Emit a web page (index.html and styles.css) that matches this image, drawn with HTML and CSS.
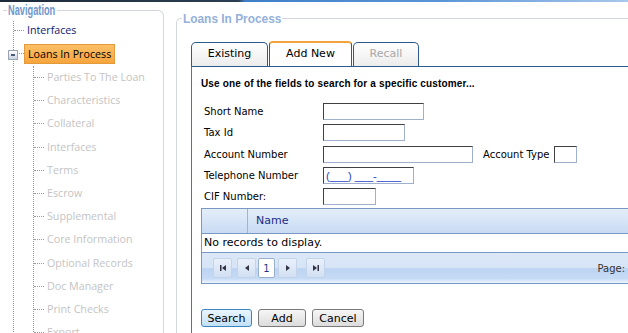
FILE: index.html
```html
<!DOCTYPE html>
<html lang="en">
<head>
    <meta charset="UTF-8">
    <title>Loans In Process</title>
    <link rel="stylesheet" href="styles.css">
</head>
<body>
    <div class="topbar"></div>
    <div class="page">
        <fieldset class="nav">
            <legend><span>Navigation</span></legend>
            <ul class="tree">
                <li class="node"><span class="link">Interfaces</span></li>
                <li class="node open">
                    <span class="toggle"></span>
                    <span class="link current">Loans In Process</span>
                    <ul class="tree sub">
                        <li class="node"><span class="link off">Parties To The Loan</span></li>
                        <li class="node"><span class="link off">Characteristics</span></li>
                        <li class="node"><span class="link off">Collateral</span></li>
                        <li class="node"><span class="link off">Interfaces</span></li>
                        <li class="node"><span class="link off">Terms</span></li>
                        <li class="node"><span class="link off">Escrow</span></li>
                        <li class="node"><span class="link off">Supplemental</span></li>
                        <li class="node"><span class="link off">Core Information</span></li>
                        <li class="node"><span class="link off">Optional Records</span></li>
                        <li class="node"><span class="link off">Doc Manager</span></li>
                        <li class="node"><span class="link off">Print Checks</span></li>
                        <li class="node"><span class="link off">Export</span></li>
                    </ul>
                </li>
            </ul>
        </fieldset>

        <fieldset class="main">
            <legend><span>Loans In Process</span></legend>

            <div class="tabs">
                <div class="tab">Existing</div>
                <div class="tab selected">Add New</div>
                <div class="tab disabled">Recall</div>
            </div>

            <div class="panel">
                <p class="hint">Use one of the fields to search for a specific customer...</p>

                <div class="form">
                    <div class="row">
                        <label>Short Name</label>
                        <input type="text" class="w100">
                    </div>
                    <div class="row">
                        <label>Tax Id</label>
                        <input type="text" class="w81">
                    </div>
                    <div class="row">
                        <label>Account Number</label>
                        <input type="text" class="w149">
                        <label class="inline">Account Type</label>
                        <input type="text" class="w22">
                    </div>
                    <div class="row">
                        <label>Telephone Number</label>
                        <input type="text" class="w90 mask" value="(___) ___-____">
                    </div>
                    <div class="row">
                        <label>CIF Number:</label>
                        <input type="text" class="w52">
                    </div>
                </div>

                <div class="grid">
                    <div class="grid-head">
                        <div class="col-sel"></div>
                        <div class="col-name">Name</div>
                    </div>
                    <div class="grid-empty">No records to display.</div>
                    <div class="pager">
                        <div class="pager-btns">
                            <span class="pbtn"><svg width="8" height="8" viewBox="0 0 8 8"><rect x="1" y="1" width="1.5" height="6" fill="#334"/><path d="M7 1 L3 4 L7 7 Z" fill="#334"/></svg></span>
                            <span class="pbtn"><svg width="8" height="8" viewBox="0 0 8 8"><path d="M6 1 L2 4 L6 7 Z" fill="#334"/></svg></span>
                            <span class="pnum">1</span>
                            <span class="pbtn"><svg width="8" height="8" viewBox="0 0 8 8"><path d="M2 1 L6 4 L2 7 Z" fill="#334"/></svg></span>
                            <span class="pbtn"><svg width="8" height="8" viewBox="0 0 8 8"><path d="M1 1 L5 4 L1 7 Z" fill="#334"/><rect x="5.5" y="1" width="1.5" height="6" fill="#334"/></svg></span>
                        </div>
                        <span class="page-label">Page:</span>
                    </div>
                </div>

                <div class="actions">
                    <button class="btn primary">Search</button>
                    <button class="btn">Add</button>
                    <button class="btn">Cancel</button>
                </div>
            </div>
        </fieldset>
    </div>
</body>
</html>
```

FILE: styles.css
```css
* {
    margin: 0;
    padding: 0;
    box-sizing: border-box;
}

body {
    font-family: "DejaVu Sans", Verdana, sans-serif;
    font-size: 10px;
    color: #000;
    background: #fff;
    overflow: hidden;
    width: 628px;
    height: 333px;
}

.topbar {
    height: 2px;
    background: linear-gradient(to right, #1d2b3a 0%, #2b3f52 38%, #3f7fc8 39%, #5b95d6 70%, #a9c8ec 100%);
}

.page {
    display: flex;
    align-items: flex-start;
}

/* ---------- fieldsets ---------- */

fieldset {
    flex: none;
    border: 1px solid #d3d6dc;
    min-width: 0;
}

legend {
    font-family: "Liberation Sans", Arial, sans-serif;
    font-weight: bold;
    padding: 0 1px;
    white-space: nowrap;
}

legend span {
    display: inline-block;
    transform-origin: 0 50%;
}

.nav {
    width: 161px;
    height: 360px;
    margin: 0 0 0 3px;
    border-radius: 0 6px 0 0;
    border-left: none;
    padding: 0;
}

.nav legend {
    color: #6f97cc;
    font-size: 14px;
    line-height: 17px;
    width: 50px;
    margin-left: 4px;
}

.nav legend span {
    transform: scaleX(0.66);
}

/* ---------- tree ---------- */

.tree {
    list-style: none;
    font-family: "Open Sans", sans-serif;
    font-size: 10.7px;
}

.nav > .tree {
    margin: 2px 0 0 10px;
    border-left: 1px dotted #9a9a9a;
}

.node {
    position: relative;
    padding-left: 10px;
}

.node::before {
    content: "";
    position: absolute;
    left: 0;
    top: 9px;
    width: 10px;
    border-top: 1px dotted #9a9a9a;
}

.nav > .tree > .node:first-child {
    margin-bottom: 4px;
}

.link {
    display: inline-block;
    height: 19px;
    line-height: 19px;
    padding: 0 3px;
    color: #10206e;
    white-space: nowrap;
}

.link.current {
    height: 20px;
    line-height: 18px;
    color: #000;
    background: linear-gradient(#fcc067, #f7a53c);
    border: 1px solid #e39a3b;
}

.link.off {
    color: #c4c4c4;
}

.toggle {
    position: absolute;
    left: -6px;
    top: 6px;
    width: 10px;
    height: 10px;
    border: 1px solid #9aa5b4;
    background: linear-gradient(#ffffff, #c9d2de);
    z-index: 1;
}

.toggle::after {
    content: "";
    position: absolute;
    left: 2px;
    top: 3px;
    width: 4px;
    border-top: 2px solid #4a5a78;
}

.tree.sub {
    margin: 2px 0 0 9px;
    border-left: 1px dotted #9a9a9a;
}

.tree.sub .node {
    height: 23.2px;
    padding-top: 2px;
}

.tree.sub .node::before {
    top: 11px;
}

/* ---------- main area ---------- */

.main {
    width: 520px;
    height: 360px;
    margin: 9px 0 0 12px;
    border-right: none;
    border-radius: 5px 0 0 0;
    padding: 0;
}

.main legend {
    color: #93b1da;
    font-size: 13.5px;
    width: 100px;
    margin-left: 5px;
}

.main legend span {
    transform: scaleX(0.88);
}

.tabs {
    display: flex;
    align-items: flex-end;
    height: 25px;
    margin: 15px 0 0 14px;
}

.tab {
    height: 24px;
    line-height: 22px;
    text-align: center;
    font-size: 11px;
    border: 1px solid #2e5a8c;
    border-bottom: none;
    border-radius: 5px 5px 0 0;
    background: linear-gradient(#ffffff, #ececec);
    margin-right: 1px;
}

.tab:nth-child(1) { width: 77px; }
.tab:nth-child(2) { width: 83px; }
.tab:nth-child(3) { width: 66px; }

.tab.selected {
    height: 25px;
    background: #fff;
    border-top: 2px solid #f2a33a;
    border-radius: 4px 4px 0 0;
}

.tab.disabled {
    color: #a8a8a8;
}

.panel {
    margin-left: 14px;
    border-top: 1px solid #2e5a8c;
    border-left: 1px solid #707070;
    height: 300px;
    padding: 11px 0 0 9px;
}

.hint {
    font-family: "Liberation Sans", Arial, sans-serif;
    font-weight: bold;
    font-size: 10px;
    letter-spacing: 0.15px;
    margin-bottom: 12px;
}

.form {
    padding-left: 3px;
}

.row {
    display: flex;
    align-items: center;
    height: 21px;
}

.row:nth-child(1) { height: 20px; }
.row:nth-child(2) { height: 23px; }

.row label {
    width: 119px;
}

.row label.inline {
    width: auto;
    margin: 0 4px 0 10px;
}

.row input {
    height: 17px;
    border: 1px solid #9fb0cc;
    border-top-color: #404040;
    border-left-color: #404040;
    font-family: "Liberation Sans", Arial, sans-serif;
    font-size: 11px;
    line-height: 15px;
    padding: 0 2px;
}

.w100 { width: 101px; }
.w81 { width: 82px; }
.w149 { width: 150px; }
.w22 { width: 23px; }
.w90 { width: 91px; }
.w52 { width: 53px; }

.mask {
    color: #1c3ec8;
}

.grid {
    margin-top: 1px;
    border: 1px solid #7a98c6;
    border-right: none;
    width: 440px;
}

.grid-head {
    display: flex;
    height: 25px;
    background: linear-gradient(#e4eefa, #c8dbf3);
    border-bottom: 1px solid #7a98c6;
}

.col-sel {
    width: 46px;
    border-right: 1px solid #9db4d8;
}

.col-name {
    padding-left: 8px;
    line-height: 24px;
    color: #1a2a86;
    font-size: 11px;
}

.grid-empty {
    height: 19px;
    line-height: 18px;
    padding-left: 2px;
    font-size: 11px;
    border-bottom: 1px solid #7a98c6;
}

.pager {
    display: flex;
    align-items: center;
    justify-content: space-between;
    height: 30px;
    background: linear-gradient(#dce8f7 0%, #d6e4f6 50%, #bcd3f2 52%, #c6dbf5 85%, #eef4fc 100%);
}

.pager-btns {
    display: flex;
    align-items: center;
    padding-left: 11px;
}

.pbtn,
.pnum {
    display: inline-flex;
    align-items: center;
    justify-content: center;
    width: 19px;
    height: 20px;
    border: 1px solid #c3d3e8;
    border-radius: 2px;
    background: linear-gradient(#e9f0fa, #d2e0f3);
    margin-right: 5px;
}

.pnum {
    width: 17px;
    background: #fff;
    border-color: #9ab0cf;
    color: #1c3a8c;
    margin-left: -1px;
    margin-right: 3px;
}

.pbtn:nth-child(2) { margin-right: 3px; }
.pbtn:nth-child(4) { margin-right: 9px; }

.page-label {
    color: #333;
    font-size: 10px;
    margin-right: 16px;
}

.actions {
    display: flex;
    gap: 6px;
    margin-top: 25px;
}

.btn {
    height: 18px;
    font-family: "DejaVu Sans", sans-serif;
    font-size: 11px;
    border: 1px solid #7a7a7a;
    border-radius: 3px;
    background: linear-gradient(#f6f6f6, #dcdcdc);
    width: 48px;
}

.btn:nth-child(3) { width: 52px; }

.btn.primary {
    width: 51px;
    border-color: #3d85c0;
    background: linear-gradient(#eaf6fd, #c1e0f6);
}
```
